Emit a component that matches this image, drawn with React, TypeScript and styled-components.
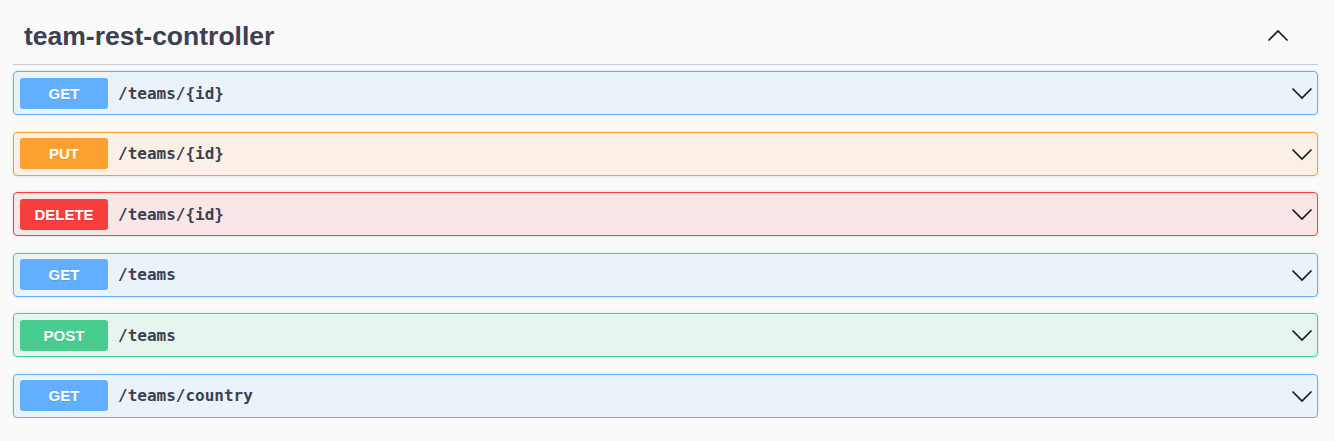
import styled, { createGlobalStyle } from 'styled-components'

const GlobalStyle = createGlobalStyle`
  body {
    margin: 0;
    background: #fafafa;
    font-family: 'Liberation Sans', Arial, sans-serif;
    color: #3b4151;
  }
`

type Method = 'get' | 'put' | 'post' | 'delete'

const methodColor: Record<Method, string> = {
  get: '97, 175, 254',
  put: '252, 161, 48',
  post: '73, 204, 144',
  delete: '249, 62, 62',
}

const Section = styled.section`
  padding: 0 16px 0 13px;
`

const TagHeader = styled.div`
  display: flex;
  align-items: center;
  justify-content: space-between;
  box-sizing: border-box;
  height: 65px;
  padding: 8px 28px 0 11px;
  border-bottom: 1px solid rgba(59, 65, 81, 0.25);
`

const TagTitle = styled.h3`
  margin: 0;
  font-size: 26.5px;
  font-weight: 700;
  color: #3b4151;
`

const Operations = styled.div`
  display: flex;
  flex-direction: column;
  gap: 16.6px;
  margin-top: 6px;
`

const OpBlock = styled.div<{ $method: Method }>`
  display: flex;
  align-items: center;
  box-sizing: border-box;
  height: 44px;
  padding: 0 3px 0 6px;
  border: 1px solid rgb(${(p) => methodColor[p.$method]});
  border-radius: 4px;
  background: rgba(${(p) => methodColor[p.$method]}, 0.1);
  box-shadow: 0 0 3px rgba(0, 0, 0, 0.12);
`

const MethodBadge = styled.span<{ $method: Method }>`
  display: flex;
  align-items: center;
  justify-content: center;
  width: 88px;
  height: 31px;
  border-radius: 3px;
  background: rgb(${(p) => methodColor[p.$method]});
  color: #fff;
  font-size: 15px;
  font-weight: 700;
  text-transform: uppercase;
  text-shadow: 0 1px 0 rgba(0, 0, 0, 0.1);
`

const Path = styled.span`
  flex: 1;
  margin-left: 10px;
  font-family: 'DejaVu Sans Mono', monospace;
  font-size: 16px;
  font-weight: 600;
  color: #3b4151;
`

const Arrow = styled.svg<{ $up?: boolean }>`
  display: block;
  width: 24px;
  height: 24px;
  transform: ${(p) => (p.$up ? 'rotate(180deg)' : 'none')};
`

const Chevron = ({ up }: { up?: boolean }) => (
  <Arrow $up={up} viewBox="0 0 24 24" fill="none">
    <path d="M2.5 7.5 L12 17 L21.5 7.5" stroke="#1b1b1b" strokeWidth="1.7" />
  </Arrow>
)

const operations: { method: Method; path: string }[] = [
  { method: 'get', path: '/teams/{id}' },
  { method: 'put', path: '/teams/{id}' },
  { method: 'delete', path: '/teams/{id}' },
  { method: 'get', path: '/teams' },
  { method: 'post', path: '/teams' },
  { method: 'get', path: '/teams/country' },
]

export default function App() {
  return (
    <>
      <GlobalStyle />
      <Section>
        <TagHeader>
          <TagTitle>team-rest-controller</TagTitle>
          <Chevron up />
        </TagHeader>
        <Operations>
          {operations.map((op, i) => (
            <OpBlock key={i} $method={op.method}>
              <MethodBadge $method={op.method}>{op.method}</MethodBadge>
              <Path>{op.path}</Path>
              <Chevron />
            </OpBlock>
          ))}
        </Operations>
      </Section>
    </>
  )
}
